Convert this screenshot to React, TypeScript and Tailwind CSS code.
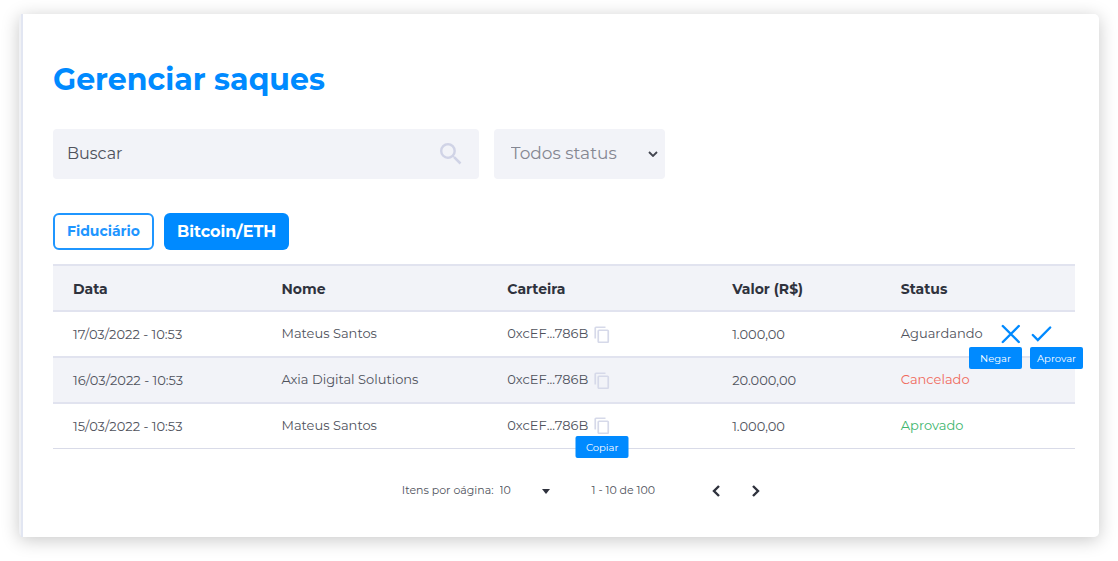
import React from "react";

type Status = "Aguardando" | "Cancelado" | "Aprovado";

interface Withdrawal {
  date: string;
  name: string;
  wallet: string;
  value: string;
  status: Status;
  copyHint?: boolean;
}

const withdrawals: Withdrawal[] = [
  { date: "17/03/2022 - 10:53", name: "Mateus Santos", wallet: "0xcEF...786B", value: "1.000,00", status: "Aguardando" },
  { date: "16/03/2022 - 10:53", name: "Axia Digital Solutions", wallet: "0xcEF...786B", value: "20.000,00", status: "Cancelado" },
  { date: "15/03/2022 - 10:53", name: "Mateus Santos", wallet: "0xcEF...786B", value: "1.000,00", status: "Aprovado", copyHint: true },
];

const statusColor: Record<Status, string> = {
  Aguardando: "text-[#4f525c]",
  Cancelado: "text-[#f0695c]",
  Aprovado: "text-[#3db56e]",
};

const tooltip =
  "absolute top-full z-10 flex h-[22px] w-[53px] items-center justify-center rounded-xs bg-[#008aff] text-[10px] text-white";

function SearchIcon() {
  return (
    <svg viewBox="3 3 18 18" className="size-[22px]" fill="#d0d3e6" aria-hidden="true">
      <path d="M15.5 14h-.79l-.28-.27A6.471 6.471 0 0 0 16 9.5 6.5 6.5 0 1 0 9.5 16c1.61 0 3.09-.59 4.23-1.57l.27.28v.79l5 4.99L20.49 19l-4.99-5zm-6 0C7.01 14 5 11.99 5 9.5S7.01 5 9.5 5 14 7.01 14 9.5 11.99 14 9.5 14z" />
    </svg>
  );
}

function CopyIcon() {
  return (
    <svg viewBox="0 0 16 17" className="h-[17px] w-4" fill="none" stroke="#d6d9e9" strokeWidth="1.7" aria-hidden="true">
      <path d="M1.25 12.500V2Q1.250 1.250 2 1.250H11.500" />
      <rect x="4.250" y="4.250" width="10" height="12" rx="0.8" />
    </svg>
  );
}

function Chevron({ d }: { d: string }) {
  return (
    <svg viewBox="0 0 8 12" className="h-3 w-2" fill="none" stroke="#2f323d" strokeWidth="2.4" aria-hidden="true">
      <path d={d} />
    </svg>
  );
}

export default function App() {
  return (
    <div className="bg-white pt-[14px] pr-[19px] pb-6 pl-[19px] font-['Montserrat','Inter',sans-serif] text-[#4f525c]">
      <main className="rounded-[5px] bg-[#f0f1f4] pl-0.5 shadow-[0_3px_18px_rgba(0,0,0,0.22)]">
        <div className="rounded-r-[5px] border-l-2 border-[#e2e6f2] bg-white pt-[46px] pr-6 pb-9 pl-[30px]">
          <h1 className="text-[30px] leading-10 font-bold text-[#008aff]">Gerenciar saques</h1>

          <div className="mt-[29px] flex gap-[15px]">
            <div className="flex h-[50px] w-5/12 items-center rounded bg-[#f2f3f8] pr-[17px] pl-[14px]">
              <input
                type="search"
                aria-label="Buscar"
                placeholder="Buscar"
                className="min-w-0 flex-1 bg-transparent text-[16px] outline-none placeholder:text-[#4f525c]"
              />
              <button type="button" aria-label="Pesquisar">
                <SearchIcon />
              </button>
            </div>
            <div className="relative w-[171px]">
              <select
                aria-label="Status"
                className="h-[50px] w-full appearance-none rounded bg-[#f2f3f8] pr-8 pl-[17px] text-[17px] text-[#858792]"
              >
                <option>Todos status</option>
              </select>
              <svg
                viewBox="0 0 10 6"
                className="pointer-events-none absolute top-[22px] right-[7px] h-1.5 w-2.5"
                fill="none"
                stroke="#42454f"
                strokeWidth="1.8"
                aria-hidden="true"
              >
                <path d="M1 1l4 4 4-4" />
              </svg>
            </div>
          </div>

          <div className="mt-[34px] flex gap-2.5">
            <button type="button" className="h-[37px] rounded-md border-2 border-[#1f96ff] px-3 text-[14px] font-bold text-[#1f96ff]">
              Fiduciário
            </button>
            <button type="button" className="h-[37px] rounded-md bg-[#008aff] px-[13px] text-[16px] font-bold text-white">
              Bitcoin/ETH
            </button>
          </div>

          <table className="mt-[14px] w-full table-fixed border-collapse text-left text-[13px]">
            <colgroup>
              <col className="w-[20.4%]" />
              <col className="w-[22.1%]" />
              <col className="w-[22%]" />
              <col className="w-[16.5%]" />
              <col />
            </colgroup>
            <thead>
              <tr className="h-[46px] border-y-2 border-[#e1e3ef] bg-[#f2f3f8] text-[14px] text-[#2f323d]">
                {["Data", "Nome", "Carteira", "Valor (R$)", "Status"].map((label) => (
                  <th key={label} scope="col" className="pt-0.5 pl-5 font-bold">
                    {label}
                  </th>
                ))}
              </tr>
            </thead>
            <tbody>
              {withdrawals.map((row) => (
                <tr key={row.date} className="h-[46px] border-b-2 border-[#e1e3ef] last:h-[45px] last:border-b last:border-[#d9dbe8] even:bg-[#f2f3f8]">
                  <td className="pt-0.5 pl-5">{row.date}</td>
                  <td className="pl-5">{row.name}</td>
                  <td className="pl-5">
                    <div className="flex items-center gap-1.5 whitespace-nowrap">
                      {row.wallet}
                      <div className="relative">
                        <button type="button" aria-label="Copiar carteira" className="block">
                          <CopyIcon />
                        </button>
                        {row.copyHint && (
                          <span role="tooltip" className={`${tooltip} left-1/2 mt-0.5 -translate-x-1/2`}>
                            Copiar
                          </span>
                        )}
                      </div>
                    </div>
                  </td>
                  <td className="pt-0.5 pl-5">{row.value}</td>
                  <td className="pl-5">
                    <div className="flex items-center justify-between pr-[23px]">
                      <span className={statusColor[row.status]}>{row.status}</span>
                      {row.status === "Aguardando" && (
                        <div className="flex gap-2.5">
                          <div className="relative">
                            <button type="button" aria-label="Negar saque" className="block">
                              <svg viewBox="0 0 20 20" className="size-5" fill="none" stroke="#008aff" strokeWidth="2.4" strokeLinecap="round" aria-hidden="true">
                                <path d="M1.800 2l16 16M17.800 2L1.800 18" />
                              </svg>
                            </button>
                            <span role="tooltip" className={`${tooltip} -right-px mt-[3px]`}>
                              Negar
                            </span>
                          </div>
                          <div className="relative">
                            <button type="button" aria-label="Aprovar saque" className="block">
                              <svg viewBox="0 0 21 20" className="h-5 w-[21px]" fill="none" stroke="#008aff" strokeWidth="2.4" strokeLinecap="round" aria-hidden="true">
                                <path d="M1.800 11l5 5L19.200 3.500" />
                              </svg>
                            </button>
                            <span role="tooltip" className={`${tooltip} -left-px mt-[3px]`}>
                              Aprovar
                            </span>
                          </div>
                        </div>
                      )}
                    </div>
                  </td>
                </tr>
              ))}
            </tbody>
          </table>

          <nav aria-label="Paginação" className="mt-8 flex h-5 items-center justify-center pl-[34px] text-[11px]">
            <label htmlFor="page-size">Itens por oágina:</label>
            <div className="relative ml-1.5">
              <select id="page-size" className="w-[50px] appearance-none bg-transparent">
                <option>10</option>
              </select>
              <svg viewBox="0 0 8 5" className="pointer-events-none absolute top-[7px] right-0 h-[5px] w-2" fill="#2f323d" aria-hidden="true">
                <path d="M0 0h8L4 5z" />
              </svg>
            </div>
            <span className="ml-[42px]">1 - 10 de 100</span>
            <button type="button" aria-label="Página anterior" className="ml-[57px]">
              <Chevron d="M7 1L2 6l5 5" />
            </button>
            <button type="button" aria-label="Próxima página" className="ml-8">
              <Chevron d="M1 1l5 5-5 5" />
            </button>
          </nav>
        </div>
      </main>
    </div>
  );
}
